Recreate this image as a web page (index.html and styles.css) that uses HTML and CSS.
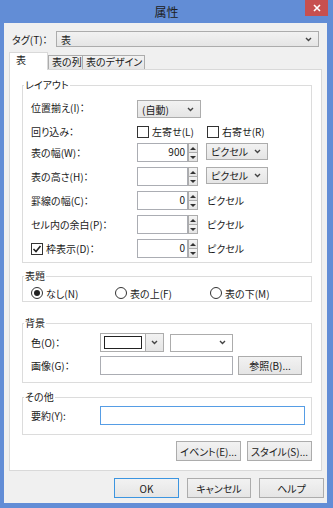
FILE: index.html
```html
<!DOCTYPE html>
<html lang="ja">
<head>
    <meta charset="UTF-8">
    <title>属性</title>
    <link rel="stylesheet" href="styles.css">
</head>
<body>
<div class="window">
    <div class="titlebar">
        <span class="title">属性</span>
        <span class="close">
            <svg width="8" height="8" viewBox="0 0 8 8"><path d="M1 1L7 7M7 1L1 7" stroke="#fff" stroke-width="1.6"/></svg>
        </span>
    </div>

    <div class="client">
        <div class="tag-row">
            <span class="tag-label">タグ(T)：</span>
            <div class="combo tag-combo">
                <span>表</span>
                <svg class="chev" width="7" height="5" viewBox="0 0 7 5"><path d="M1 1l2.5 2.5L6 1" stroke="#444" stroke-width="1.4" fill="none"/></svg>
            </div>
        </div>

        <div class="tabs">
            <div class="tab active">表</div>
            <div class="tab t-col">表の列</div>
            <div class="tab t-design">表のデザイン</div>
        </div>

        <div class="panel">
            <!-- Layout -->
            <fieldset class="group g-layout">
                <legend>レイアウト</legend>
                <div class="rows">
                    <div class="row r1">
                        <span class="label">位置揃え(I)：</span>
                        <div class="combo w64">
                            <span>(自動)</span>
                            <svg class="chev" width="7" height="5" viewBox="0 0 7 5"><path d="M1 1l2.5 2.5L6 1" stroke="#444" stroke-width="1.4" fill="none"/></svg>
                        </div>
                    </div>
                    <div class="row r2">
                        <span class="label">回り込み：</span>
                        <label class="check w70"><span class="box"></span>左寄せ(L)</label>
                        <label class="check"><span class="box"></span>右寄せ(R)</label>
                    </div>
                    <div class="row">
                        <span class="label">表の幅(W)：</span>
                        <div class="spin"><span class="spin-input">900</span><span class="spin-btns"><span class="up"></span><span class="down"></span></span></div>
                        <div class="combo unit">
                            <span>ピクセル</span>
                            <svg class="chev" width="7" height="5" viewBox="0 0 7 5"><path d="M1 1l2.5 2.5L6 1" stroke="#444" stroke-width="1.4" fill="none"/></svg>
                        </div>
                    </div>
                    <div class="row">
                        <span class="label">表の高さ(H)：</span>
                        <div class="spin"><span class="spin-input"></span><span class="spin-btns"><span class="up"></span><span class="down"></span></span></div>
                        <div class="combo unit">
                            <span>ピクセル</span>
                            <svg class="chev" width="7" height="5" viewBox="0 0 7 5"><path d="M1 1l2.5 2.5L6 1" stroke="#444" stroke-width="1.4" fill="none"/></svg>
                        </div>
                    </div>
                    <div class="row">
                        <span class="label">罫線の幅(C)：</span>
                        <div class="spin"><span class="spin-input">0</span><span class="spin-btns"><span class="up"></span><span class="down"></span></span></div>
                        <span class="unit-text">ピクセル</span>
                    </div>
                    <div class="row">
                        <span class="label">セル内の余白(P)：</span>
                        <div class="spin"><span class="spin-input"></span><span class="spin-btns"><span class="up"></span><span class="down"></span></span></div>
                        <span class="unit-text">ピクセル</span>
                    </div>
                    <div class="row r-last">
                        <label class="label check"><span class="box checked"><svg width="10" height="10" viewBox="0 0 10 10"><path d="M1.5 5l2.5 2.5L8.5 2" stroke="#222" stroke-width="1.6" fill="none"/></svg></span>枠表示(D)：</label>
                        <div class="spin"><span class="spin-input">0</span><span class="spin-btns"><span class="up"></span><span class="down"></span></span></div>
                        <span class="unit-text">ピクセル</span>
                    </div>
                </div>
            </fieldset>

            <!-- Caption -->
            <fieldset class="group g-caption">
                <legend>表題</legend>
                <div class="rows">
                    <div class="radio-row">
                        <label class="radio w84"><span class="dot checked"></span>なし(N)</label>
                        <label class="radio w95"><span class="dot"></span>表の上(F)</label>
                        <label class="radio"><span class="dot"></span>表の下(M)</label>
                    </div>
                </div>
            </fieldset>

            <!-- Background -->
            <fieldset class="group g-back">
                <legend>背景</legend>
                <div class="rows">
                    <div class="row2 first">
                        <span class="label2">色(O)：</span>
                        <div class="color-combo">
                            <span class="swatch-wrap"><span class="swatch"></span></span>
                            <span class="color-btn">
                                <svg width="7" height="5" viewBox="0 0 7 5"><path d="M1 1l2.5 2.5L6 1" stroke="#444" stroke-width="1.4" fill="none"/></svg>
                            </span>
                        </div>
                        <div class="combo white-combo">
                            <span></span>
                            <svg class="chev" width="7" height="5" viewBox="0 0 7 5"><path d="M1 1l2.5 2.5L6 1" stroke="#444" stroke-width="1.4" fill="none"/></svg>
                        </div>
                    </div>
                    <div class="row2">
                        <span class="label2">画像(G)：</span>
                        <span class="textbox img-box"></span>
                        <button class="btn browse">参照(B)...</button>
                    </div>
                </div>
            </fieldset>

            <!-- Other -->
            <fieldset class="group g-other">
                <legend>その他</legend>
                <div class="rows">
                    <div class="row2">
                        <span class="label2">要約(Y):</span>
                        <span class="textbox summary focus"></span>
                    </div>
                </div>
            </fieldset>

            <div class="panel-buttons">
                <button class="btn">イベント(E)...</button>
                <button class="btn">スタイル(S)...</button>
            </div>
        </div>

        <div class="dialog-buttons">
            <button class="btn default">OK</button>
            <button class="btn w64">キャンセル</button>
            <button class="btn">ヘルプ</button>
        </div>
    </div>
</div>
</body>
</html>
```

FILE: styles.css
```css
* {
    margin: 0;
    padding: 0;
    box-sizing: border-box;
}

body {
    font-family: "Noto Sans CJK JP", "Noto Sans", sans-serif;
    font-size: 10px;
    font-feature-settings: "palt";
    color: #1a1a1a;
    background: #628dd6;
}

.window {
    width: 333px;
    height: 508px;
    background: #628dd6;
    display: flex;
    flex-direction: column;
    padding: 0 6px 5px 4px;
}

.titlebar {
    height: 23px;
    margin: 0 -6px 0 -4px;
    position: relative;
    display: flex;
    align-items: center;
    justify-content: center;
}

.title {
    font-size: 12px;
    color: #202020;
    margin-top: -1px;
}

.close {
    position: absolute;
    top: 0;
    right: 5px;
    width: 23px;
    height: 16px;
    background: #c75050;
    display: flex;
    align-items: center;
    justify-content: center;
}

.client {
    flex: 1;
    background: #f0f0f0;
    display: flex;
    flex-direction: column;
    padding: 8px 0 5px 0;
}

/* Tag row */
.tag-row {
    display: flex;
    align-items: center;
    height: 16px;
    padding-left: 8px;
}

.tag-label {
    width: 44px;
}

.combo {
    display: flex;
    align-items: center;
    justify-content: space-between;
    height: 18px;
    padding: 0 6px 0 4px;
    border: 1px solid #acacac;
    background: linear-gradient(#f2f2f2, #e5e5e5);
}

.tag-combo {
    width: 263px;
    height: 16px;
}

.w64 { width: 64px; }

.unit {
    width: 62px;
    margin-left: 8px;
    height: 17px;
}

/* Tabs */
.tabs {
    display: flex;
    align-items: flex-end;
    height: 17px;
    margin: 5px 0 0 5px;
}

.tab {
    height: 14px;
    line-height: 12px;
    padding: 0 2px 0 3px;
    white-space: nowrap;
    border: 1px solid #acacac;
    border-bottom: none;
    background: linear-gradient(#f2f2f2, #e5e5e5);
}

.tab.active {
    position: relative;
    z-index: 2;
    width: 39px;
    height: 18px;
    margin-bottom: -1px;
    line-height: 14px;
    padding-left: 6px;
    background: #fff;
    border-color: #d9d9d9;
}

.t-col { width: 35px; }

.t-design {
    margin-left: -1px;
}

.panel {
    width: 313px;
    height: 402px;
    margin-left: 5px;
    background: #fff;
    border: 1px solid #d9d9d9;
}

/* Group boxes */
.group {
    width: 290px;
    margin-left: 12px;
    border: 1px solid #dcdcdc;
}

.group legend {
    margin-left: 1px;
    padding: 0 1px;
    line-height: 14px;
}

.rows {
    padding-left: 8px;
}

.g-layout { margin-top: 8px; }
.g-layout .rows { padding: 8px 0 4px 8px; }

.row {
    display: flex;
    align-items: flex-start;
    height: 24px;
}

.row .label {
    width: 106px;
    line-height: 19px;
}

.r1 { height: 21px; }
.r1 .label { line-height: 16px; }

.r2 {
    height: 22px;
    align-items: center;
    padding-bottom: 1px;
}

.r-last { height: 19px; }

.check {
    display: flex;
    align-items: center;
}

.w70 { width: 70px; }

.box {
    width: 12px;
    height: 12px;
    margin-right: 3px;
    border: 1px solid #333;
    background: #fff;
    display: flex;
    align-items: center;
    justify-content: center;
}

.spin {
    display: flex;
    height: 19px;
}

.spin-input {
    width: 51px;
    height: 19px;
    border: 1px solid #abadb3;
    text-align: right;
    padding-right: 2px;
    line-height: 16px;
}

.spin-btns {
    width: 10px;
    display: flex;
    flex-direction: column;
}

.spin-btns span {
    flex: 1;
    border: 1px solid #acacac;
    background: linear-gradient(#f4f4f4, #e4e4e4);
    display: flex;
    align-items: center;
    justify-content: center;
}

.spin-btns .down { border-top: none; }

.spin-btns .up::after {
    content: "";
    border: 3px solid transparent;
    border-bottom: 3px solid #333;
    border-top: none;
}

.spin-btns .down::after {
    content: "";
    border: 3px solid transparent;
    border-top: 3px solid #333;
    border-bottom: none;
}

.unit-text {
    margin-left: 9px;
    line-height: 19px;
}

/* Caption */
.g-caption { margin-top: 6px; }
.g-caption .rows { padding: 3px 0 1px 8px; }

.radio-row {
    display: flex;
    height: 14px;
    align-items: center;
}

.radio {
    display: flex;
    align-items: center;
}

.w84 { width: 84px; }
.w95 { width: 95px; }

.dot {
    width: 12px;
    height: 12px;
    margin-right: 3px;
    border: 1px solid #333;
    border-radius: 50%;
    background: #fff;
    display: flex;
    align-items: center;
    justify-content: center;
}

.dot.checked::after {
    content: "";
    width: 6px;
    height: 6px;
    border-radius: 50%;
    background: #222;
}

/* Background */
.g-back { margin-top: 14px; }
.g-back .rows { padding: 3px 0 7px 8px; }

.row2 {
    display: flex;
    align-items: center;
    height: 19px;
}

.row2.first { margin-bottom: 4px; }

.label2 { width: 69px; }

.color-combo {
    display: flex;
    width: 64px;
    height: 19px;
    border: 1px solid #acacac;
    background: #fff;
}

.swatch-wrap {
    flex: 1;
    padding: 2px 3px;
}

.swatch {
    display: block;
    height: 100%;
    border: 1px solid #222;
    background: #fff;
}

.color-btn {
    width: 18px;
    border-left: 1px solid #acacac;
    background: linear-gradient(#f2f2f2, #e5e5e5);
    display: flex;
    align-items: center;
    justify-content: center;
}

.white-combo {
    width: 63px;
    margin-left: 6px;
    background: #fff;
}

.textbox {
    height: 19px;
    border: 1px solid #abadb3;
    background: #fff;
}

.img-box { width: 133px; }

.textbox.focus { border-color: #569de5; }

.btn {
    height: 19px;
    width: 65px;
    font: inherit;
    color: #1a1a1a;
    border: 1px solid #acacac;
    background: linear-gradient(#f2f2f2, #e5e5e5);
}

.browse { margin-left: 5px; width: 64px; }

/* Other */
.g-other { margin-top: 7px; }
.g-other .rows { padding: 2px 0 9px 8px; }

.summary { width: 205px; }

.panel-buttons {
    display: flex;
    justify-content: flex-end;
    gap: 6px;
    width: 290px;
    margin: 6px 0 0 12px;
}

.panel-buttons .btn { height: 20px; }

.dialog-buttons {
    display: flex;
    justify-content: flex-end;
    gap: 8px;
    margin-top: 7px;
    padding-right: 3px;
}

.dialog-buttons .btn { height: 20px; }
.dialog-buttons .w64 { width: 64px; }

.btn.default { border-color: #3c95e0; }
```
